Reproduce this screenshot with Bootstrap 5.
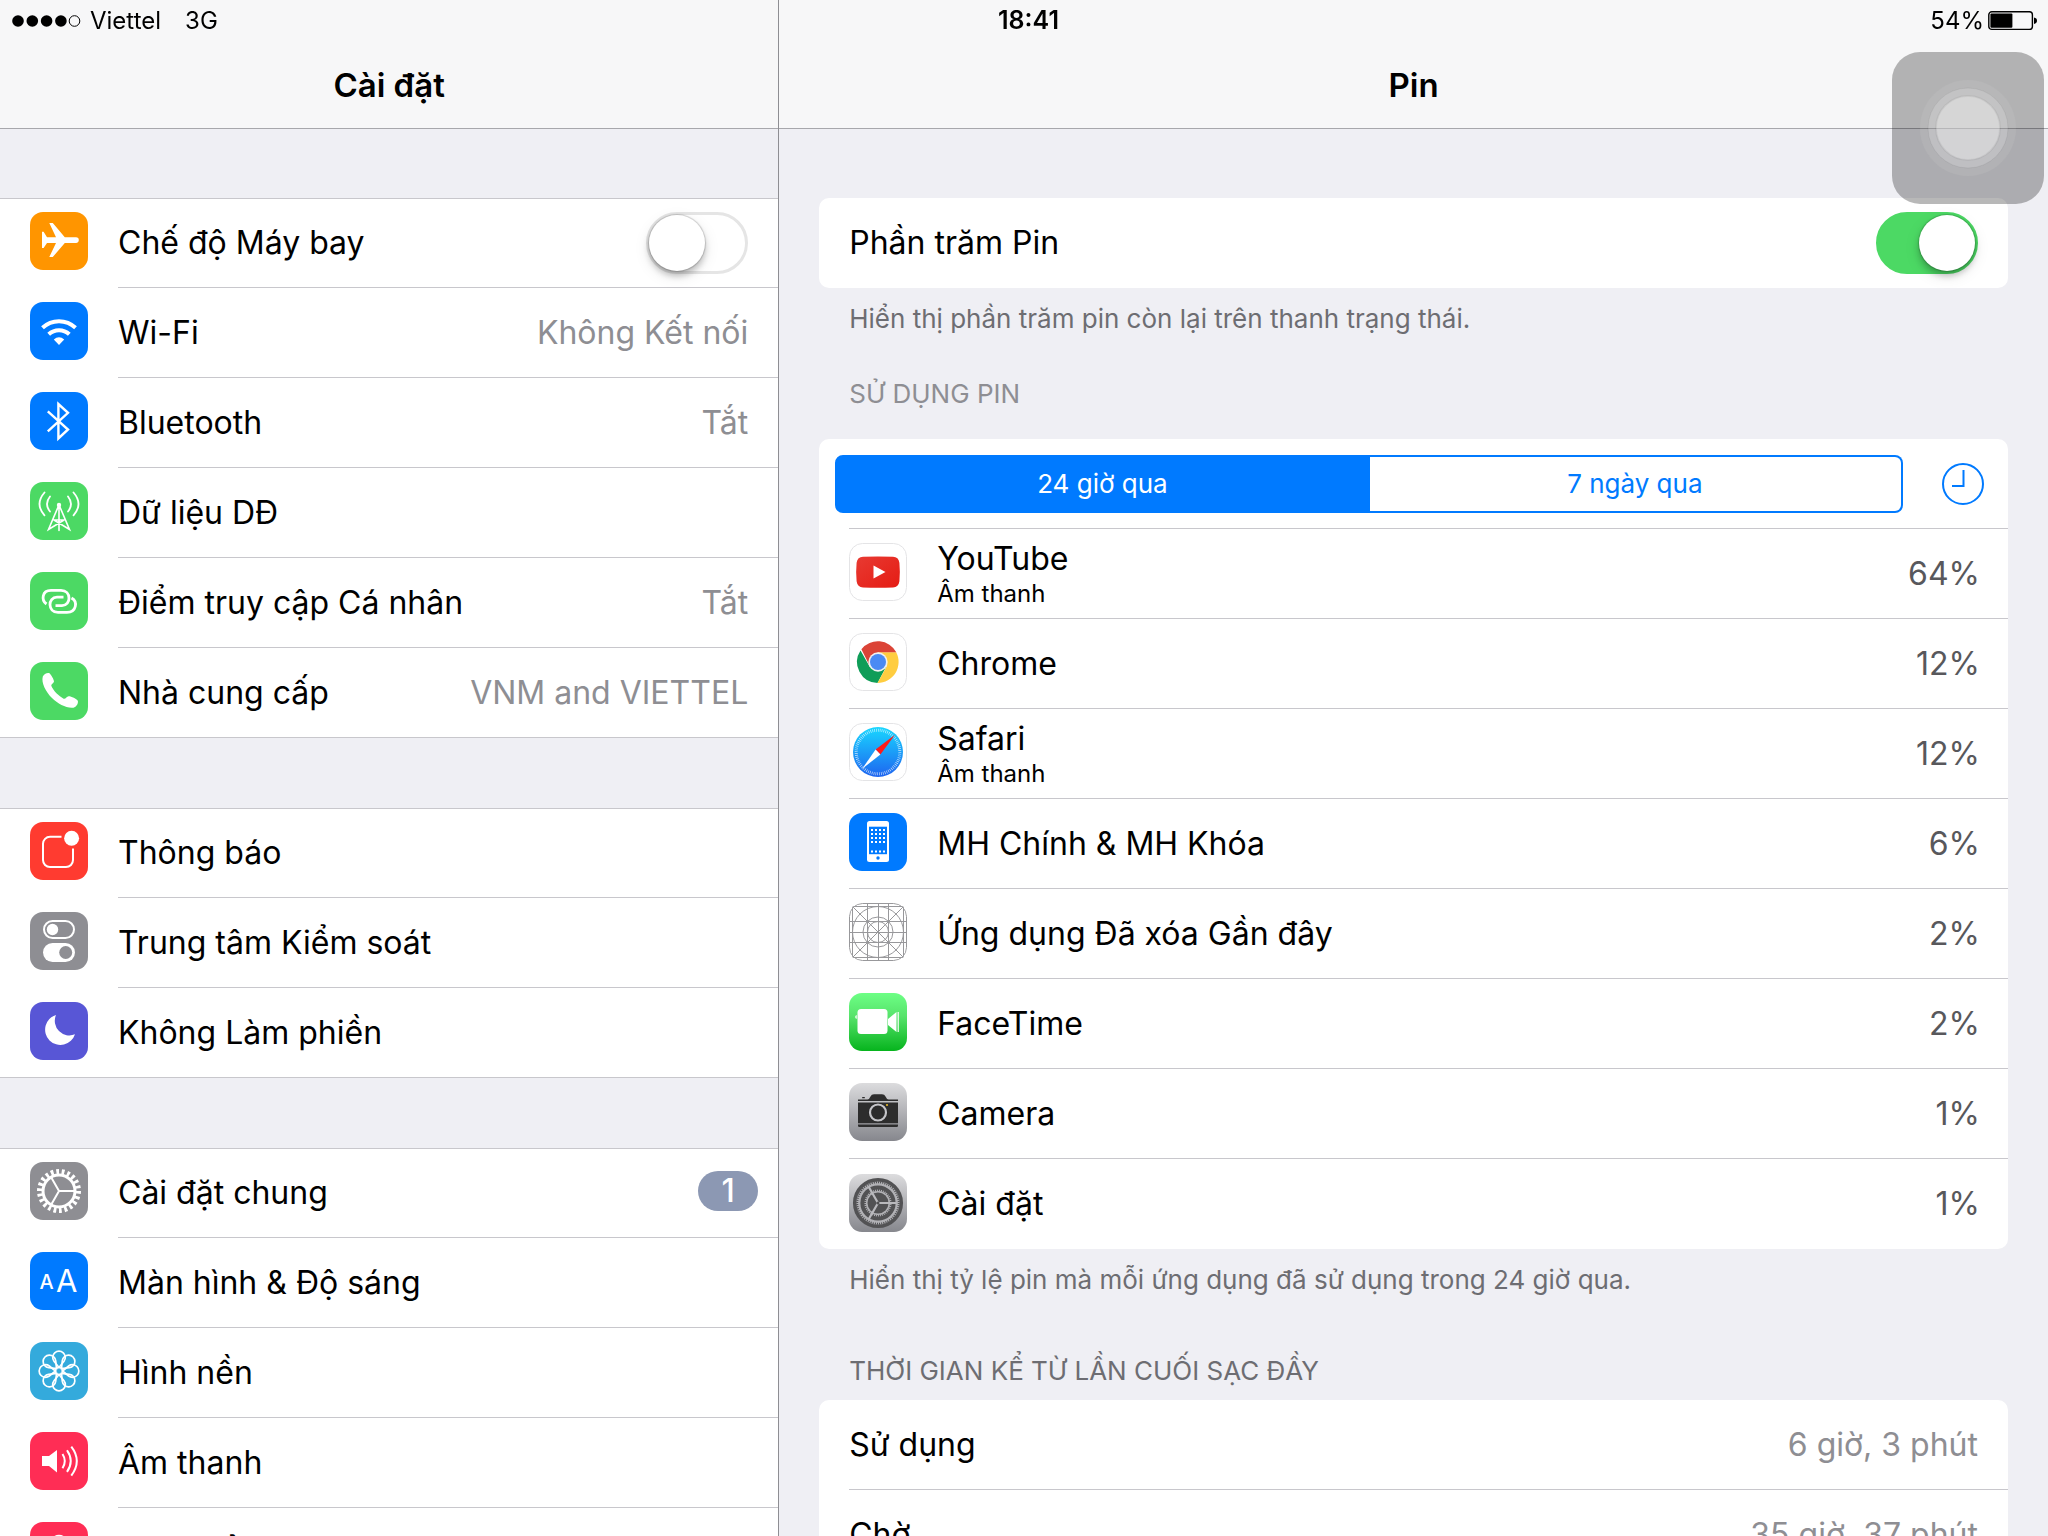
<!DOCTYPE html>
<html lang="vi">
<head>
<meta charset="utf-8">
<meta name="viewport" content="width=device-width, initial-scale=1">
<title>Cài đặt – Pin</title>
<link href="https://cdn.jsdelivr.net/npm/bootstrap@5.3.0/dist/css/bootstrap.min.css" rel="stylesheet">
<style>
  :root { --line: #c8c7cc; --tint: #007aff; --page: #efeff4; --bar: #f7f7f8; --dim: #8e8e93; --note: #6d6d72; }
  body { font-family: Inter, "Noto Sans", sans-serif; font-size: 32px; line-height: 40px; color: #000; background: var(--page); }
  a { color: inherit; text-decoration: none; }
  .status { height: 41px; padding: 0 11px 0 12px; font-size: 24px; line-height: 41px; z-index: 20; }
  .status > div { flex: 1 1 0; }
  .clock-text { font-weight: 600; font-size: 25px; }
  .master { width: calc(38% + 1px); border-right: 1px solid #8e8e93; }
  .titlebar { height: 129px; padding-top: 65px; background: var(--bar); border-bottom: 1px solid #a7a7ac; flex: none; }
  .master .titlebar { box-shadow: 1px 0 0 var(--line); }
  .titlebar h1 { font-size: 33px; line-height: 40px; font-weight: 600; margin: 0; }
  .scroller { padding-top: 69px; }
  .group { background: #fff; margin-bottom: 70px; box-shadow: inset 0 1px 0 var(--line), inset 0 -1px 0 var(--line); }
  .cell { height: 90px; padding-left: 30px; gap: 30px; }
  .cell > svg { margin-top: 14px; }
  .cell-body { height: 90px; padding-right: 30px; border-bottom: 1px solid var(--line); }
  .group li:last-child .cell-body { border-bottom-color: transparent; }
  .value { color: var(--dim); }
  .counter { width: 60px; height: 40px; border-radius: 20px; background: #8c98b3; color: #fff; font-weight: 500; margin-right: -10px; margin-bottom: 3px; }
  .appicon { width: 58px; height: 58px; flex: none; display: block; }
  .toggle { appearance: none; width: 102px; height: 62px; border-radius: 31px; border: 3px solid #e5e5e5; background: #fff; margin: 0; flex: none; }
  .toggle::before { content: ""; display: block; width: 56px; height: 56px; border-radius: 50%; background: #fff; box-shadow: 0 0 1px 1px rgba(0,0,0,.16), 0 5px 6px rgba(0,0,0,.22), 0 5px 16px rgba(0,0,0,.1); }
  .toggle:checked { background: #4cd964; border-color: #4cd964; padding-left: 40px; }
  .detail { padding-left: 40px; padding-right: 40px; }
  .panel { background: #fff; border-radius: 10px; padding-left: 30px; }
  .line { height: 90px; padding-right: 30px; border-bottom: 1px solid var(--line); }
  .line:last-child { border-bottom: 0; }
  .line > svg { margin-top: -3px; margin-right: 30px; }
  .percent { color: #58585c; margin-right: -2px; }
  .sub { font-size: 24px; line-height: 34px; }
  .two { line-height: 36px; padding-top: 5px; }
  .note { font-size: 26px; line-height: 30px; color: var(--note); margin: 0; padding: 16px 30px 0; }
  .heading { font-size: 26px; line-height: 30px; font-weight: 400; color: var(--note); margin: 0; padding-left: 30px; }
  .usage-heading { color: var(--dim); padding-top: 45px; padding-bottom: 30px; }
  .since-heading { padding-top: 61px; padding-bottom: 14px; }
  .segments { margin-left: -14px; margin-right: 39px; }
  .segments .btn { width: 50%; height: 58px; padding: 0; border: 2px solid var(--tint); border-radius: 8px; color: var(--tint); font-size: 26px; line-height: 54px; }
  .segments .btn:last-child { margin-left: 0; border-left: 0; }
  .segments .btn-check:checked + .btn { background: var(--tint); border-color: var(--tint); color: #fff; }
  .clock-btn { padding: 0; border: 0; margin-right: -6px; }
  .clock-btn svg { display: block; width: 42px; height: 42px; }
  .assist { right: 4px; top: 52px; width: 152px; height: 152px; border: 0; padding: 0; border-radius: 28px; background: rgba(0,0,0,.28); z-index: 30; }
  .assist svg { display: block; }
</style>
</head>
<body class="vh-100 overflow-hidden">

<div class="status d-flex fixed-top">
  <div class="d-flex align-items-center">
    <svg width="70" height="14" viewBox="0 0 70 14" role="img" aria-label="Tín hiệu"><circle cx="6" cy="7" r="5.8"/><circle cx="20.3" cy="7" r="5.8"/><circle cx="34.6" cy="7" r="5.8"/><circle cx="48.9" cy="7" r="5.8"/><circle cx="62.5" cy="7" r="5.3" fill="none" stroke="#000"/></svg>
    <span class="ms-2">Viettel</span><span class="ms-4">3G</span>
  </div>
  <div class="clock-text text-center ps-2">18:41</div>
  <div class="d-flex justify-content-end align-items-center">
    <span>54%</span>
    <svg class="ms-1" width="49" height="20" viewBox="0 0 49 20" role="img" aria-label="Pin"><rect x=".8" y=".8" width="43.6" height="17.6" rx="3" fill="none" stroke="#000" stroke-width="1.4"/><rect x="2.4" y="2.4" width="22" height="14.4" rx="1"/><path d="M46 6.500c2 .3 3 1.500 3 3.200s-1 2.900-3 3.200z"/></svg>
  </div>
</div>

<button class="assist position-fixed" type="button" aria-label="AssistiveTouch">
  <svg width="152" height="152" viewBox="0 0 152 152"><g fill="#fff" stroke="#000" stroke-opacity=".05"><circle cx="76" cy="76" r="48" fill-opacity=".06" stroke="none"/><circle cx="76" cy="76" r="40" fill-opacity=".17" stroke-width="1"/><circle cx="76" cy="76" r="32" fill-opacity=".3" stroke-width="2"/></g></svg>
</button>

<div class="d-flex h-100">
  <nav class="master d-flex flex-column flex-shrink-0 h-100 overflow-hidden" aria-label="Cài đặt">
    <div class="titlebar text-center"><h1>Cài đặt</h1></div>
    <div class="scroller">
      <ul class="group list-unstyled">
        <li class="cell d-flex">
          <svg class="appicon" viewBox="0 0 58 58"><rect width="58" height="58" rx="13" fill="#ff9500"/><path fill="#fff" d="M12 19.700h1.600L17 25.300h9L19.300 11h3.500l12 14.300H46a2.800 2.800 0 0 1 0 5.600H34.800L22.800 45h-3.500L26 30.900h-9L13.600 36H12z"/></svg>
          <div class="cell-body d-flex flex-grow-1 align-items-center justify-content-between"><label for="airplane">Chế độ Máy bay</label><input class="toggle" type="checkbox" role="switch" id="airplane"></div>
        </li>
        <li><a class="cell d-flex" href="#wifi">
          <svg class="appicon" viewBox="0 0 58 58"><rect width="58" height="58" rx="13" fill="#007aff"/><g fill="none" stroke="#fff" stroke-width="4"><path d="M12.500 25.800a24 24 0 0 1 33 0"/><path d="M18.700 32.300a15 15 0 0 1 20.600 0"/></g><path fill="#fff" d="M29 43l-5.200-5.500q5.200-4.600 10.400 0z"/></svg>
          <div class="cell-body d-flex flex-grow-1 align-items-center justify-content-between"><span>Wi-Fi</span><span class="value">Không Kết nối</span></div></a>
        </li>
        <li><a class="cell d-flex" href="#bluetooth">
          <svg class="appicon" viewBox="0 0 58 58"><rect width="58" height="58" rx="13" fill="#007aff"/><path fill="none" stroke="#fff" stroke-width="2.400" d="M17.800 19.300L38 37.500l-9.600 8.900V12l9.600 8.800-20.200 18.500"/></svg>
          <div class="cell-body d-flex flex-grow-1 align-items-center justify-content-between"><span>Bluetooth</span><span class="value">Tắt</span></div></a>
        </li>
        <li><a class="cell d-flex" href="#data">
          <svg class="appicon" viewBox="0 0 58 58"><rect width="58" height="58" rx="13" fill="#4cd964"/><g fill="none" stroke="#fff" stroke-width="1.800" stroke-linecap="round"><path d="M20 14.500q-6 7.500 0 15M38 14.500q6 7.500 0 15M14.500 10.500q-10 11.500 0 22.800M43.500 10.500q10 11.500 0 22.800"/><path stroke-width="1.600" d="M29 23v25.500M28.500 24L18.500 47.500 34 38M29.500 24l10 23.500L24 38M24 38h10"/></g><circle cx="29" cy="23" r="2.200" fill="#fff"/></svg>
          <div class="cell-body d-flex flex-grow-1 align-items-center justify-content-between"><span>Dữ liệu DĐ</span></div></a>
        </li>
        <li><a class="cell d-flex" href="#hotspot">
          <svg class="appicon" viewBox="0 0 58 58"><rect width="58" height="58" rx="13" fill="#4cd964"/><g fill="none" stroke="#fff" stroke-width="2.800"><path d="M16.500 32C11 28 12 18.400 21 18.400h10c10.500 0 10.500 15.200 1 15.200h-6.500"/><path d="M41.500 26c6.500 3.500 5 14.400-4.500 14.400h-9c-10.500 0-10.500-15.200-1-15.200h6.500"/></g></svg>
          <div class="cell-body d-flex flex-grow-1 align-items-center justify-content-between"><span>Điểm truy cập Cá nhân</span><span class="value">Tắt</span></div></a>
        </li>
        <li><a class="cell d-flex" href="#carrier">
          <svg class="appicon" viewBox="0 0 58 58"><rect width="58" height="58" rx="13" fill="#4cd964"/><path fill="#fff" d="M12.800 14.500c1-2.300 4.700-4.400 6.700-3.200 1.800 1.600 4.300 6 4.500 8.200-.3 1.700-3.200 2.800-2.600 4.600 1.800 4.600 7.600 10.400 12.200 12.600 2 .8 3-2.200 5-2.400 2.500-.1 8 2.700 9.200 4.500.8 2.700-1.500 6.200-4.300 6.900-6.500 1-15.500-3.600-21.500-9.600S11 21 12.800 14.500z"/></svg>
          <div class="cell-body d-flex flex-grow-1 align-items-center justify-content-between"><span>Nhà cung cấp</span><span class="value">VNM and VIETTEL</span></div></a>
        </li>
      </ul>
      <ul class="group list-unstyled">
        <li><a class="cell d-flex" href="#notifications">
          <svg class="appicon" viewBox="0 0 58 58"><rect width="58" height="58" rx="13" fill="#ff3b30"/><path fill="none" stroke="#fff" stroke-width="2" d="M31.500 14.800H20a7 7 0 0 0-7 7V38a7 7 0 0 0 7 7h16a7 7 0 0 0 7-7V26.500"/><circle cx="41.600" cy="16.300" r="7.500" fill="#fff"/></svg>
          <div class="cell-body d-flex flex-grow-1 align-items-center"><span>Thông báo</span></div></a>
        </li>
        <li><a class="cell d-flex" href="#control-center">
          <svg class="appicon" viewBox="0 0 58 58"><rect width="58" height="58" rx="13" fill="#8e8e93"/><rect x="14" y="9" width="30" height="17" rx="8.500" fill="none" stroke="#fff" stroke-width="2"/><circle cx="22.500" cy="17.500" r="5.700" fill="#fff"/><rect x="13" y="31" width="32" height="19" rx="9.500" fill="#fff"/><circle cx="35.700" cy="40.500" r="6.500" fill="#8e8e93"/></svg>
          <div class="cell-body d-flex flex-grow-1 align-items-center"><span>Trung tâm Kiểm soát</span></div></a>
        </li>
        <li><a class="cell d-flex" href="#dnd">
          <svg class="appicon" viewBox="0 0 58 58"><rect width="58" height="58" rx="13" fill="#5856d6"/><path fill="#fff" d="M26 13a15.300 15.300 0 1 0 19 19.300A14.600 14.600 0 0 1 26 13z"/></svg>
          <div class="cell-body d-flex flex-grow-1 align-items-center"><span>Không Làm phiền</span></div></a>
        </li>
      </ul>
      <ul class="group list-unstyled">
        <li><a class="cell d-flex" href="#general">
          <svg class="appicon" viewBox="0 0 58 58"><rect width="58" height="58" rx="13" fill="#8e8e93"/><g fill="none" stroke="#fff"><circle cx="29" cy="29" r="19.300" stroke-width="5.400" pathLength="44" stroke-dasharray="1 1"/><circle cx="29" cy="29" r="16" stroke-width="3"/><path stroke-width="2" d="M29 29h16M29 29l-8-13.900M29 29l-8 13.900"/></g></svg>
          <div class="cell-body d-flex flex-grow-1 align-items-center justify-content-between"><span>Cài đặt chung</span><span class="counter text-center">1</span></div></a>
        </li>
        <li><a class="cell d-flex" href="#display">
          <svg class="appicon" viewBox="0 0 58 58"><rect width="58" height="58" rx="13" fill="#007aff"/><g fill="#fff" font-family="Inter, sans-serif"><text x="9.500" y="37" font-size="20" font-weight="500">A</text><text x="26" y="40" font-size="31">A</text></g></svg>
          <div class="cell-body d-flex flex-grow-1 align-items-center"><span>Màn hình &amp; Độ sáng</span></div></a>
        </li>
        <li><a class="cell d-flex" href="#wallpaper">
          <svg class="appicon" viewBox="0 0 58 58"><rect width="58" height="58" rx="13" fill="#34aadc"/><defs><path id="petal" d="M29 25.500l-5-6.200A6.300 6.300 0 1 1 34 19.300z"/></defs><g fill="none" stroke="#fff" stroke-width="1.700"><circle cx="29" cy="29" r="3.500"/><use href="#petal"/><use href="#petal" transform="rotate(45 29 29)"/><use href="#petal" transform="rotate(90 29 29)"/><use href="#petal" transform="rotate(135 29 29)"/><use href="#petal" transform="rotate(180 29 29)"/><use href="#petal" transform="rotate(225 29 29)"/><use href="#petal" transform="rotate(270 29 29)"/><use href="#petal" transform="rotate(315 29 29)"/></g></svg>
          <div class="cell-body d-flex flex-grow-1 align-items-center"><span>Hình nền</span></div></a>
        </li>
        <li><a class="cell d-flex" href="#sound">
          <svg class="appicon" viewBox="0 0 58 58"><rect width="58" height="58" rx="13" fill="#ff2d55"/><path fill="#fff" d="M12 24h7l8-6v22.400l-8-6.400h-7z"/><path fill="none" stroke="#fff" stroke-width="2" d="M32.500 22q4.600 7 0 14.200M37 18.300q7.500 10.700 0 21.600M41.300 14.700q11 14.300 0 29"/></svg>
          <div class="cell-body d-flex flex-grow-1 align-items-center"><span>Âm thanh</span></div></a>
        </li>
        <li><a class="cell d-flex" href="#passcode">
          <svg class="appicon" viewBox="0 0 58 58"><rect width="58" height="58" rx="13" fill="#ff2d55"/><rect x="17" y="26" width="24" height="20" rx="3" fill="#fff"/><path fill="none" stroke="#fff" stroke-width="2.500" d="M22 27v-6.500a7 6.500 0 0 1 14 0V27"/></svg>
          <div class="cell-body d-flex flex-grow-1 align-items-center"><span>Mật khẩu</span></div></a>
        </li>
      </ul>
    </div>
  </nav>

  <main class="d-flex flex-column flex-grow-1 h-100 overflow-hidden">
    <div class="titlebar text-center"><h1>Pin</h1></div>
    <div class="scroller detail">
      <div class="panel">
        <div class="line d-flex align-items-center justify-content-between"><label for="percent">Phần trăm Pin</label><input class="toggle" type="checkbox" role="switch" id="percent" checked></div>
      </div>
      <p class="note">Hiển thị phần trăm pin còn lại trên thanh trạng thái.</p>

      <h2 class="heading usage-heading">SỬ DỤNG PIN</h2>
      <div class="panel">
        <div class="line d-flex align-items-center">
          <div class="segments btn-group flex-grow-1" role="group" aria-label="Khoảng thời gian">
            <input class="btn-check" type="radio" name="range" id="day" checked><label class="btn" for="day">24 giờ qua</label>
            <input class="btn-check" type="radio" name="range" id="week"><label class="btn" for="week">7 ngày qua</label>
          </div>
          <button class="clock-btn btn" type="button" aria-label="Thời gian sử dụng"><svg viewBox="0 0 42 42" fill="none" stroke="#007aff" stroke-width="2"><circle cx="21" cy="21" r="20"/><path d="M21.500 7v16H10"/></svg></button>
        </div>
        <div class="line d-flex align-items-center">
          <svg class="appicon" viewBox="0 0 58 58"><defs><linearGradient id="yt" x2="1" y2="1"><stop stop-color="#e83a32"/><stop offset="1" stop-color="#e51c14"/></linearGradient></defs><rect x=".5" y=".5" width="57" height="57" rx="13" fill="#fff" stroke="#e4e4e6"/><path fill="url(#yt)" d="M14 13.800q15-.6 30 0 5.600.2 6.400 6 .9 9.200 0 18.400-.8 5.900-6.400 6.200-15 .6-30 0-5.600-.3-6.400-6.200-.9-9.200 0-18.400.8-5.800 6.400-6z"/><path fill="#fff" d="M24.500 22.500v13L36.500 29z"/></svg>
          <div class="two flex-grow-1"><div>YouTube</div><div class="sub">Âm thanh</div></div><span class="percent">64%</span>
        </div>
        <div class="line d-flex align-items-center">
          <svg class="appicon" viewBox="0 0 58 58"><rect x=".5" y=".5" width="57" height="57" rx="13" fill="#fff" stroke="#e4e4e6"/><path fill="#0f9d58" d="M11.500 17.500A21 21 0 0 0 28.500 50L37.200 33.800 20.700 33.800z"/><path fill="#ffcd40" d="M47.200 19.300A21 21 0 0 1 28.500 50l9-16.200L29 19.300z"/><path fill="#db4437" d="M12.400 16.200L21 33.500l8-14.200h18.300A21 21 0 0 0 12.400 16.200z"/><circle cx="29" cy="29" r="9.700" fill="#f1f1f1"/><circle cx="29" cy="29" r="8" fill="#4a8af4"/></svg>
          <div class="flex-grow-1">Chrome</div><span class="percent">12%</span>
        </div>
        <div class="line d-flex align-items-center">
          <svg class="appicon" viewBox="0 0 58 58"><defs><linearGradient id="sf" x2="0" y2="1"><stop stop-color="#19d7ff"/><stop offset="1" stop-color="#1e64f0"/></linearGradient></defs><rect x=".5" y=".5" width="57" height="57" rx="13" fill="#fff" stroke="#e4e4e6"/><circle cx="29" cy="29" r="25" fill="url(#sf)"/><circle cx="29" cy="29" r="21.800" fill="none" stroke="#fff" stroke-opacity=".75" stroke-width="3" pathLength="144" stroke-dasharray=".7 1.300"/><path fill="#ff1a1a" d="M46 11.800L26.600 26.600l4.800 4.800z"/><path fill="#fff" d="M13 46l13.600-19.400 4.800 4.800z"/></svg>
          <div class="two flex-grow-1"><div>Safari</div><div class="sub">Âm thanh</div></div><span class="percent">12%</span>
        </div>
        <div class="line d-flex align-items-center">
          <svg class="appicon" viewBox="0 0 58 58"><rect width="58" height="58" rx="13" fill="#007aff"/><rect x="18" y="8" width="22" height="41" rx="2.500" fill="#fff"/><rect x="20" y="13.700" width="18" height="27.500" fill="#007aff"/><g stroke="#fff" stroke-width="2" stroke-dasharray="2 2"><path d="M22 17h14M22 21h14M22 25h14M22 29h14M22 38.500h14"/></g><circle cx="29" cy="45" r="1.700" fill="#007aff"/></svg>
          <div class="flex-grow-1">MH Chính &amp; MH Khóa</div><span class="percent">6%</span>
        </div>
        <div class="line d-flex align-items-center">
          <svg class="appicon" viewBox="0 0 58 58"><defs><clipPath id="rc"><rect width="58" height="58" rx="13"/></clipPath></defs><g fill="none" stroke="#98989b" clip-path="url(#rc)"><rect x=".5" y=".5" width="57" height="57" rx="13"/><path d="M0 3.500h58M0 18.500h58M0 29.500h58M0 39.500h58M0 54.500h58M3.500 0v58M18.500 0v58M29.500 0v58M39.500 0v58M54.500 0v58M0 0l58 58M58 0L0 58"/><circle cx="29" cy="29" r="25.500"/><circle cx="29" cy="29" r="15"/><circle cx="29" cy="29" r="10.500"/></g></svg>
          <div class="flex-grow-1">Ứng dụng Đã xóa Gần đây</div><span class="percent">2%</span>
        </div>
        <div class="line d-flex align-items-center">
          <svg class="appicon" viewBox="0 0 58 58"><defs><linearGradient id="ft" x2="0" y2="1"><stop stop-color="#6dff85"/><stop offset=".4" stop-color="#57e36b"/><stop offset="1" stop-color="#06b41d"/></linearGradient></defs><rect width="58" height="58" rx="13" fill="url(#ft)"/><rect x="8.500" y="16" width="30" height="25" rx="3.500" fill="#fff"/><path fill="#fff" d="M39 26l8.500-7v20L39 32zM48.600 19h1.200v20h-1.200zM7.700 22v4q-1.500-.5-1.500-2t1.500-2z"/></svg>
          <div class="flex-grow-1">FaceTime</div><span class="percent">2%</span>
        </div>
        <div class="line d-flex align-items-center">
          <svg class="appicon" viewBox="0 0 58 58"><defs><linearGradient id="gr" x2="0" y2="1"><stop stop-color="#dcdcde"/><stop offset="1" stop-color="#86878d"/></linearGradient></defs><rect width="58" height="58" rx="13" fill="url(#gr)"/><path fill="#2d2d2d" d="M9 18V16.500h9.500q2-.5 3-3 1-2.300 3.500-2.300h8q2.500 0 3.500 2.300 1 2.500 3 3H49V18zM9 19.500h40v20.800H9zM9 41.500h40v1.300q0 1.200-1.200 1.200H10.200Q9 44 9 42.800zM13.200 14h2.600v1.200h-2.600z"/><circle cx="29" cy="29.500" r="9.600" fill="#222"/><circle cx="29" cy="29.500" r="8" fill="#2c2c2c" stroke="#c4c4c8" stroke-width="2.200"/><circle cx="38" cy="22" r="1.100" fill="#e3b82c"/></svg>
          <div class="flex-grow-1">Camera</div><span class="percent">1%</span>
        </div>
        <div class="line d-flex align-items-center">
          <svg class="appicon" viewBox="0 0 58 58"><rect width="58" height="58" rx="13" fill="url(#gr)"/><circle cx="29" cy="29" r="23.500" fill="#b1b1b5"/><g fill="none" stroke="#525254"><circle cx="29" cy="29" r="23.300" stroke-width="3.500"/><circle cx="29" cy="29" r="20.800" stroke-width="2" pathLength="120" stroke-dasharray="1 1"/><circle cx="29" cy="29" r="15.600" stroke-width="4"/><circle cx="29" cy="29" r="13" stroke-width="2" pathLength="80" stroke-dasharray="1 1"/></g><circle cx="29" cy="29" r="10.500" fill="#525254"/><path stroke="#b9b9bd" stroke-width="2.200" d="M29 29h18.500M29 29l-9.200-16M29 29l-9.200 16"/><circle cx="29" cy="29" r="1.500" fill="#525254"/></svg>
          <div class="flex-grow-1">Cài đặt</div><span class="percent">1%</span>
        </div>
      </div>
      <p class="note">Hiển thị tỷ lệ pin mà mỗi ứng dụng đã sử dụng trong 24 giờ qua.</p>

      <h2 class="heading since-heading">THỜI GIAN KỂ TỪ LẦN CUỐI SẠC ĐẦY</h2>
      <div class="panel">
        <div class="line d-flex align-items-center justify-content-between"><span>Sử dụng</span><span class="value">6 giờ, 3 phút</span></div>
        <div class="line d-flex align-items-center justify-content-between"><span>Chờ</span><span class="value">35 giờ, 37 phút</span></div>
      </div>
    </div>
  </main>
</div>
<script src="https://cdn.jsdelivr.net/npm/bootstrap@5.3.0/dist/js/bootstrap.bundle.min.js"></script>
</body>
</html>
